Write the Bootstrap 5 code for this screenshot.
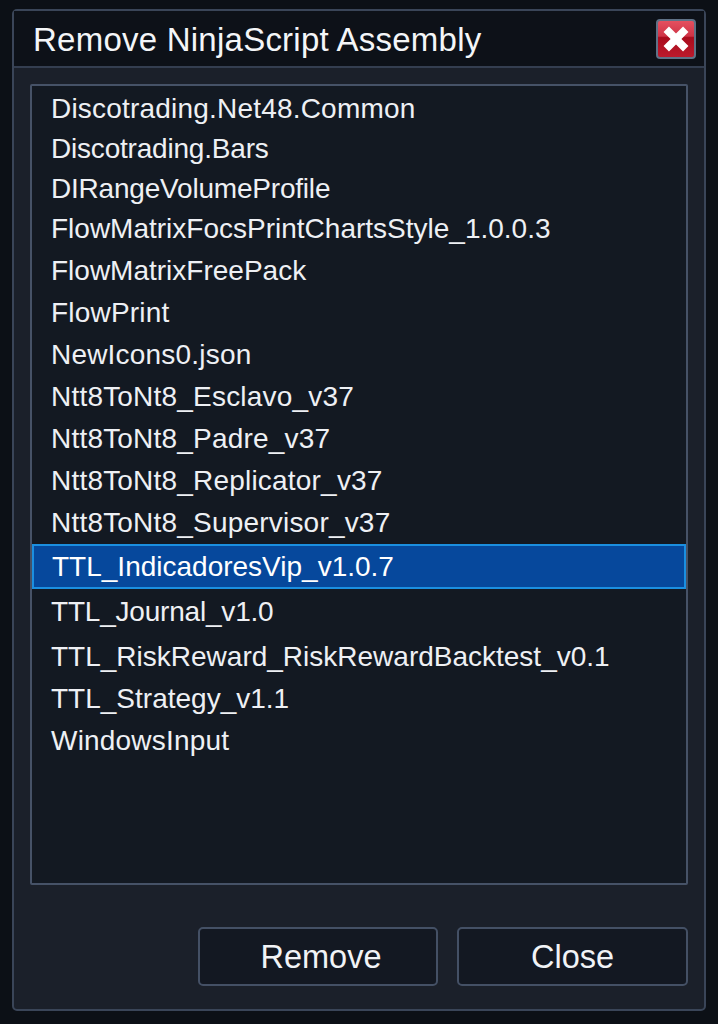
<!DOCTYPE html>
<html lang="en">
<head>
<meta charset="utf-8">
<title>Remove NinjaScript Assembly</title>
<link href="https://cdn.jsdelivr.net/npm/bootstrap@5.3.0/dist/css/bootstrap.min.css" rel="stylesheet">
<style>
html,body{height:100%}
body{background:#0c1016;font-family:"Liberation Sans",Arial,sans-serif;color:#f1f3f6;padding:9px 12px 13px}
.dlg-win{height:1002px;border:2px solid #3a4558;border-radius:5px;background:#1b202a}
.dlg-title{height:57px;background:#0d1118;border-bottom:2px solid #343e50;padding:0 8px 0 19px}
.dlg-title h1{font-size:33px;font-weight:400;margin:0;padding-top:1px;color:#f4f6f8;line-height:1;letter-spacing:.24px}
.dlg-x{width:40px;height:40px;padding:0;border:2px solid #5f7287;border-radius:4px;background:linear-gradient(#e4505f 0,#cf3346 42%,#a90b1c 46%,#bb1a2c 100%)}
.dlg-body{padding:16px 16px 22px 16px;flex:1;min-height:0}
.dlg-list{height:801px;border:2px solid #465267;border-radius:2px;background:#131922;padding:3px 0 0 0;list-style:none;margin:0}
.dlg-row{height:40px;padding:0 0 0 19px;font-size:28px;line-height:1;color:#eef0f4;display:flex;align-items:center;white-space:nowrap}
.dlg-tall{height:42px}
.dlg-first{margin-top:1px}
.dlg-sel{height:45px;background:#06489c;border:2px solid #1b8fe0;padding-left:18px;color:#fff}
.dlg-j{height:46px}
.dlg-r{height:43px}
.dlg-wide{letter-spacing:.2px}
.dlg-narrow{letter-spacing:-.2px}
.dlg-foot{margin-top:42px;gap:19px}
.dlg-btn{height:59px;font-size:32.5px;line-height:1;color:#f1f3f6;background:#131822;border:2px solid #445065;border-radius:5px;padding:2px 0 0}
.dlg-btn:hover{color:#fff;background:#131822;border-color:#445065}
.dlg-rm{width:240px;padding-left:6px}
.dlg-cl{width:231px}
</style>
</head>
<body>
<div class="dlg-win d-flex flex-column">
  <div class="dlg-title d-flex align-items-center justify-content-between">
    <h1>Remove NinjaScript Assembly</h1>
    <button class="dlg-x d-flex align-items-center justify-content-center" type="button" aria-label="Close">
      <svg width="26" height="26" viewBox="2 2 24 24"><path d="M2.5 7.5 7.5 2.5 14 9 20.500 2.500 25.500 7.500 19 14 25.500 20.500 20.500 25.500 14 19 7.500 25.500 2.500 20.500 9 14Z" fill="#fff"/></svg>
    </button>
  </div>
  <div class="dlg-body d-flex flex-column">
    <ul class="dlg-list">
      <li class="dlg-row dlg-wide">Discotrading.Net48.Common</li>
      <li class="dlg-row dlg-narrow">Discotrading.Bars</li>
      <li class="dlg-row dlg-narrow">DIRangeVolumeProfile</li>
      <li class="dlg-row">FlowMatrixFocsPrintChartsStyle_1.0.0.3</li>
      <li class="dlg-row dlg-tall dlg-first">FlowMatrixFreePack</li>
      <li class="dlg-row dlg-tall dlg-wide">FlowPrint</li>
      <li class="dlg-row dlg-tall dlg-wide">NewIcons0.json</li>
      <li class="dlg-row dlg-tall dlg-wide">Ntt8ToNt8_Esclavo_v37</li>
      <li class="dlg-row dlg-tall dlg-wide">Ntt8ToNt8_Padre_v37</li>
      <li class="dlg-row dlg-tall dlg-wide">Ntt8ToNt8_Replicator_v37</li>
      <li class="dlg-row dlg-tall dlg-wide">Ntt8ToNt8_Supervisor_v37</li>
      <li class="dlg-row dlg-sel">TTL_IndicadoresVip_v1.0.7</li>
      <li class="dlg-row dlg-j dlg-narrow">TTL_Journal_v1.0</li>
      <li class="dlg-row dlg-r">TTL_RiskReward_RiskRewardBacktest_v0.1</li>
      <li class="dlg-row dlg-tall">TTL_Strategy_v1.1</li>
      <li class="dlg-row dlg-tall dlg-wide">WindowsInput</li>
    </ul>
    <div class="dlg-foot d-flex justify-content-end">
      <button class="btn dlg-btn dlg-rm" type="button">Remove</button>
      <button class="btn dlg-btn dlg-cl" type="button">Close</button>
    </div>
  </div>
</div>
<script src="https://cdn.jsdelivr.net/npm/bootstrap@5.3.0/dist/js/bootstrap.bundle.min.js"></script>
</body>
</html>
